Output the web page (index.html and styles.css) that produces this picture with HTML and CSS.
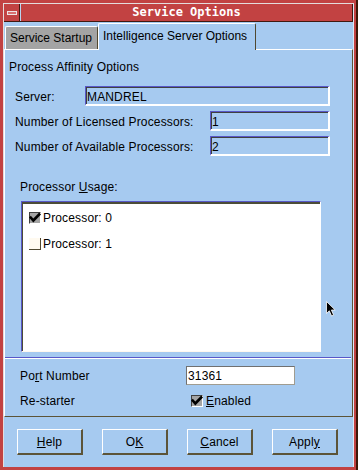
FILE: index.html
```html
<!DOCTYPE html>
<html lang="en">
<head>
  <meta charset="UTF-8" />
  <title>Service Options</title>
  <link rel="stylesheet" href="styles.css">
</head>
<body>

  <div class="window">
    <div class="frame">
      <div class="titlebar">
        <div class="sysmenu"><span class="dash"></span></div>
        <div class="title">Service Options</div>
      </div>

      <div class="client">
        <div class="tabs">
          <div class="tab">Service Startup</div>
          <div class="tab active">Intelligence Server Options</div>
        </div>

        <div class="panel">
          <div class="group-title">Process Affinity Options</div>

          <div class="fields">
            <div class="row">
              <span class="lbl lbl-server">Server:</span>
              <div class="field field-server">MANDREL</div>
            </div>
            <div class="row">
              <span class="lbl lbl-num">Number of Licensed Processors:</span>
              <div class="field field-num">1</div>
            </div>
            <div class="row">
              <span class="lbl lbl-num">Number of Available Processors:</span>
              <div class="field field-num">2</div>
            </div>
          </div>

          <div class="usage-title">Processor <u>U</u>sage:</div>

          <div class="listbox">
            <div class="item">
              <span class="check checked">
                <svg width="12" height="12" viewBox="0 0 12 12"><polygon points="0,5.5 1.8,3.8 4.3,6.4 10.2,0.6 12,2.4 4.3,10.4" fill="#000"/></svg>
              </span>
              <span>Processor: 0</span>
            </div>
            <div class="item">
              <span class="check"></span>
              <span>Processor: 1</span>
            </div>
          </div>

          <div class="groove"></div>

          <div class="port-row">
            <span class="lbl-port">Po<u>r</u>t Number</span>
            <div class="port-field">31361</div>
          </div>

          <div class="restart-row">
            <span class="lbl-restart">Re-starter</span>
            <span class="check checked">
              <svg width="12" height="12" viewBox="0 0 12 12"><polygon points="0,5.5 1.8,3.8 4.3,6.4 10.2,0.6 12,2.4 4.3,10.4" fill="#000"/></svg>
            </span>
            <span class="enabled"><u>E</u>nabled</span>
          </div>
        </div>

        <div class="buttons">
          <button class="btn"><u>H</u>elp</button>
          <button class="btn">O<u>K</u></button>
          <button class="btn"><u>C</u>ancel</button>
          <button class="btn">Appl<u>y</u></button>
        </div>
      </div>
    </div>

    <svg class="cursor" width="11" height="16" viewBox="0 0 11 16">
      <path d="M0.5 0.5 L0.5 12.5 L3.3 9.8 L5.6 15 L7.6 14.1 L5.4 9 L9.2 9 Z" fill="#000" stroke="#fff" stroke-width="0.8"/>
    </svg>
  </div>

</body>
</html>
```

FILE: styles.css
```css
body {
  margin: 0;
  font-family: "Liberation Sans", Arial, sans-serif;
  font-size: 12px;
  letter-spacing: 0.15px;
  color: #000;
}
.window {
  position: relative;
  width: 358px;
  height: 470px;
  box-sizing: border-box;
  background: #c24242;
  border-right: 2px solid #3a1808;
  padding: 3px 2px 3px 3px;
}
.frame {
  height: 100%;
  box-sizing: border-box;
  border-left: 1px solid #e4dcdc;
  border-top: 1px solid #e4dcdc;
  border-right: 1px solid #dce8f4;
  background: #a6caf0;
  display: flex;
  flex-direction: column;
}
.titlebar {
  display: flex;
  height: 18px;
  box-sizing: border-box;
  background: #c24242;
  border-bottom: 1px solid #401810;
  border-right: 1px solid #401810;
}
.sysmenu {
  width: 16px;
  box-sizing: border-box;
  border-right: 1px solid #401810;
  display: flex;
  align-items: center;
  padding-left: 3px;
}
.dash {
  width: 10px;
  height: 4px;
  box-sizing: border-box;
  border: 1px solid #ece4e4;
  background: #d87070;
}
.title {
  flex: 1;
  border-left: 1px solid #b8d4f0;
  text-align: center;
  color: #fff;
  font-family: "DejaVu Sans Mono", "Liberation Mono", monospace;
  font-weight: bold;
  font-size: 12px;
  letter-spacing: 0;
  line-height: 17px;
}
.client {
  flex: 1;
  display: flex;
  flex-direction: column;
}
.tabs {
  display: flex;
  align-items: flex-end;
  height: 27px;
  padding-left: 1px;
}
.tab {
  width: 93px;
  height: 23px;
  box-sizing: border-box;
  background: #a4a4a4;
  border-top: 1px solid #fff;
  border-left: 1px solid #fff;
  border-right: 1px solid #504830;
  border-top-left-radius: 2px;
  border-top-right-radius: 2px;
  padding: 4px 0 0 4px;
  line-height: 14px;
  letter-spacing: 0;
  white-space: nowrap;
}
.tab.active {
  width: 158px;
  height: 27px;
  margin-bottom: -1px;
  position: relative;
  z-index: 1;
  background: #a6caf0;
  padding-top: 5px;
}
.panel {
  height: 368px;
  box-sizing: border-box;
  border-top: 1px solid #fff;
  border-left: 1px solid #fff;
  border-right: 1px solid #5c5438;
  border-bottom: 1px solid #5c5438;
}
.group-title {
  margin: 10px 0 0 4px;
  line-height: 14px;
}
.fields {
  margin-top: 12px;
  display: flex;
  flex-direction: column;
  gap: 5px;
}
.row {
  display: flex;
  align-items: flex-start;
  height: 20px;
  padding-left: 10px;
}
.lbl {
  line-height: 14px;
  padding-top: 4px;
  white-space: nowrap;
}
.lbl-server {
  width: 70px;
}
.lbl-num {
  width: 195px;
}
.field {
  height: 20px;
  box-sizing: border-box;
  border-top: 1px solid #5858c8;
  border-left: 1px solid #5858c8;
  border-right: 2px solid #fff;
  border-bottom: 2px solid #fff;
  box-shadow: inset 1px 1px 0 #404040;
  padding: 3px 0 0 1px;
  line-height: 14px;
}
.field-server {
  width: 245px;
}
.field-num {
  width: 120px;
}
.usage-title {
  margin: 24px 0 0 15px;
  line-height: 14px;
}
.listbox {
  margin: 7px 0 0 16px;
  width: 300px;
  height: 151px;
  box-sizing: border-box;
  background: #fff;
  border-top: 1px solid #5858c8;
  border-left: 1px solid #5858c8;
  border-right: 1px solid #fff;
  border-bottom: 1px solid #fff8ee;
  box-shadow: inset 1px 2px 0 #4c4c38;
  padding: 3px 0 0 7px;
}
.item {
  display: flex;
  align-items: center;
  gap: 2px;
  height: 26px;
  line-height: 14px;
}
.check {
  width: 12px;
  height: 12px;
  box-sizing: border-box;
  background: #fffaf0;
  border-right: 1px solid #504830;
  border-bottom: 1px solid #504830;
  display: inline-flex;
  overflow: visible;
}
.check.checked {
  background: #a4a4a4;
  border-top: 1px solid #404040;
  border-left: 1px solid #404040;
  border-right: 1px solid #fff;
  border-bottom: 1px solid #fff;
}
.check svg {
  margin: -1px 0 0 -1px;
  flex: none;
}
.groove {
  margin: 5px 1px 0 0;
  height: 2px;
  box-sizing: border-box;
  border-top: 1px solid #5858c8;
  border-bottom: 1px solid #fff;
}
.port-row {
  margin-top: 7px;
  display: flex;
  align-items: center;
  height: 19px;
  padding-left: 15px;
  line-height: 14px;
}
.lbl-port {
  width: 166px;
}
.port-field {
  width: 109px;
  height: 19px;
  box-sizing: border-box;
  background: #fff;
  border: 1px solid #a09c90;
  border-top-color: #707070;
  border-left-color: #707070;
  padding: 2px 0 0 1px;
}
.restart-row {
  margin-top: 9px;
  display: flex;
  align-items: center;
  height: 14px;
  padding-left: 15px;
  line-height: 14px;
}
.lbl-restart {
  width: 171px;
}
.enabled {
  margin-left: 3px;
}
.buttons {
  display: flex;
  gap: 19px;
  margin-top: 12px;
  padding-left: 13px;
}
.btn {
  width: 66px;
  height: 26px;
  box-sizing: border-box;
  background: #a6caf0;
  border-top: 1px solid #fff;
  border-left: 1px solid #fff;
  border-right: 2px solid #5c5438;
  border-bottom: 2px solid #5c5438;
  font-family: "Liberation Sans", Arial, sans-serif;
  font-size: 12px;
  letter-spacing: 0.15px;
  color: #000;
  padding: 0;
  line-height: 14px;
}
.cursor {
  position: absolute;
  left: 326px;
  top: 301px;
}
```
